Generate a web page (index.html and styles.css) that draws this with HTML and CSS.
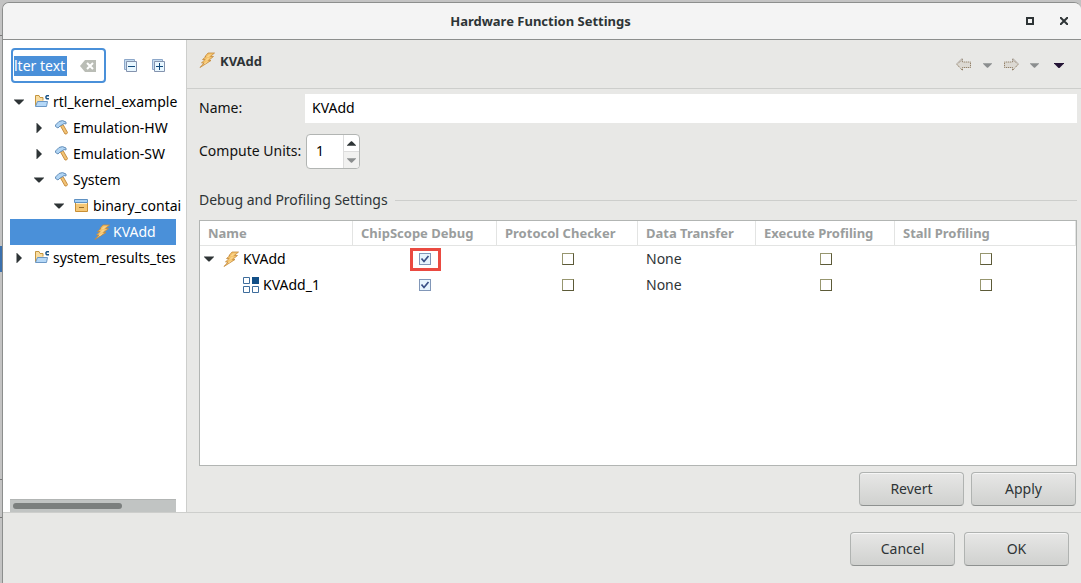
FILE: index.html
```html
<!DOCTYPE html>
<html lang="en">
<head>
<meta charset="utf-8">
<title>Hardware Function Settings</title>
<meta name="viewport" content="width=device-width, initial-scale=1">
<link rel="stylesheet" href="styles.css">
</head>
<body>
<svg class="defs" aria-hidden="true">
  <symbol id="bolt" viewBox="0 0 16 16">
    <path d="M9 1H15.500L11.500 4.500H14.500L9.500 8.500H12L1 15.500 5 11H2.500L6 7.500H3.500L7 4.500H6z" fill="#f5c36c" stroke="#c48a3c" stroke-width=".8" stroke-linejoin="round"/>
    <path d="M11 2.500 8.500 5M9.500 6 7 8.500M8 9.500 5.500 12" stroke="#ffe3a4" fill="none"/>
  </symbol>
  <symbol id="hammer" viewBox="0 0 16 16">
    <path d="M6.500 6 9 4.500 13.500 12.500q-.5 2-2.500 1.500z" fill="#f3c374" stroke="#c58e42"/>
    <path d="M1.500 6.500V5L5 1.500Q8.500-.5 12 2v2L10 3.500 8 5 6.500 5.500 4 8z" fill="#b0d4f3" stroke="#6790ba"/>
  </symbol>
  <symbol id="folder" viewBox="0 0 16 16">
    <path d="M1.500 12V1.500H5l1 2h3v3" fill="#f9dda0" stroke="#c4953f"/>
    <path d="M1.500 12.500 3.500 7.500h10l-1 5z" fill="#b5d8f7" stroke="#6b97c5"/>
    <path d="M15 1.700h-2.200l-.8.800v1.500l.8.800H15" fill="none" stroke="#165084" stroke-width="1.400"/>
  </symbol>
  <symbol id="box" viewBox="0 0 16 16">
    <path d="M1.500 4.500h12v9h-12z" fill="#f5c877" stroke="#c98f35"/>
    <path d="M.5 1.500h13v3H.500z" fill="#a7d0f4" stroke="#5f91c2"/>
    <path d="M2 5.500h11" stroke="#fff0cc"/><path d="M5 9.500h5" stroke="#976b29"/>
  </symbol>
  <symbol id="down" viewBox="0 0 10 5"><path d="M0 0h10v.5L5.500 5h-1L0 .5z" fill="currentColor"/></symbol>
  <symbol id="right" viewBox="0 0 5 10"><path d="M0 0h.5L5 4.500v1L.5 10H0z" fill="currentColor"/></symbol>
  <symbol id="arrow" viewBox="0 0 16 14">
    <path d="M1 6.500 6.500 1v3h8v5.500h-8v3z" fill="#dcd9d3" stroke="#7d674a" stroke-dasharray="1 1"/>
    <path d="M.5 6 6 .5v3" fill="none" stroke="#b5afa8"/>
  </symbol>
</svg>
<div class="dialog">
  <header class="titlebar">
    <h1>Hardware Function Settings</h1>
    <button class="winbtn" aria-label="Maximize"><svg width="8" height="8"><path d="M1 1h6v6H1z" fill="none" stroke="#2e3436" stroke-width="2"/></svg></button>
    <button class="winbtn" aria-label="Close"><svg width="8" height="8"><path d="M0 0 8 8M8 0 0 8" stroke="#2e3436" stroke-width="2"/></svg></button>
  </header>

  <div class="main">
    <aside class="side">
      <div class="tools">
        <div class="filter">
          <input type="text" value="lter text" aria-label="Filter">
          <button aria-label="Clear filter"><svg width="16" height="12" viewBox="0 0 16 12"><path d="M0 6 5 0h11v12H5z" fill="#babdb6"/><path d="m7 3 6 6M13 3 7 9" stroke="#fff" stroke-width="2"/></svg></button>
        </div>
        <button class="tool" aria-label="Collapse All"><svg width="14" height="14"><path d="M.5.500h10v10H.500z" fill="#c5dcef" stroke="#8da8ca"/><path d="M2.500 2.500h10v10h-10z" fill="#e8f7ff" stroke="#8493ae"/><path d="M4 7.500h7" stroke="#124a7d"/></svg></button>
        <button class="tool" aria-label="Expand All"><svg width="14" height="14"><path d="M.5.500h10v10H.500z" fill="#c5dcef" stroke="#8da8ca"/><path d="M2.500 2.500h10v10h-10z" fill="#e8f7ff" stroke="#8493ae"/><path d="M4 7.500h7M7.500 4v7" stroke="#124a7d"/></svg></button>
      </div>
      <ul class="tree">
        <li class="node"><svg class="tw"><use href="#down"/></svg><svg class="ic"><use href="#folder"/></svg><span>rtl_kernel_example</span></li>
        <li class="node l1"><svg class="tw"><use href="#right"/></svg><svg class="ic"><use href="#hammer"/></svg><span>Emulation-HW</span></li>
        <li class="node l1"><svg class="tw"><use href="#right"/></svg><svg class="ic"><use href="#hammer"/></svg><span>Emulation-SW</span></li>
        <li class="node l1"><svg class="tw"><use href="#down"/></svg><svg class="ic"><use href="#hammer"/></svg><span>System</span></li>
        <li class="node l2"><svg class="tw"><use href="#down"/></svg><svg class="ic"><use href="#box"/></svg><span>binary_contai</span></li>
        <li class="node l3 selected"><svg class="tw"></svg><svg class="ic"><use href="#bolt"/></svg><span>KVAdd</span></li>
        <li class="node"><svg class="tw"><use href="#right"/></svg><svg class="ic"><use href="#folder"/></svg><span>system_results_tes</span></li>
      </ul>
      <div class="scrollbar"><div class="thumb"></div></div>
    </aside>

    <section class="page">
      <div class="pagehead">
        <svg class="ic"><use href="#bolt"/></svg>
        <h2>KVAdd</h2>
        <nav class="history" aria-label="History">
          <button aria-label="Back"><svg width="16" height="14"><use href="#arrow"/></svg></button>
          <button class="menu" aria-label="Back history"><svg width="9" height="5"><use href="#down"/></svg></button>
          <button aria-label="Forward"><svg class="flip" width="16" height="14"><use href="#arrow"/></svg></button>
          <button class="menu" aria-label="Forward history"><svg width="9" height="5"><use href="#down"/></svg></button>
          <button class="menu dark" aria-label="View menu"><svg width="10" height="5"><use href="#down"/></svg></button>
        </nav>
      </div>

      <div class="content">
        <div class="field">
          <label for="name">Name:</label>
          <input id="name" class="name" type="text" value="KVAdd">
        </div>
        <div class="field units">
          <label for="units">Compute Units:</label>
          <div class="spinner">
            <input id="units" type="number" value="1" min="1">
            <div class="steps">
              <button aria-label="Increase"><svg class="up" width="9" height="5"><use href="#down"/></svg></button>
              <button aria-label="Decrease" disabled><svg width="9" height="5"><use href="#down"/></svg></button>
            </div>
          </div>
        </div>
        <h3 class="legend">Debug and Profiling Settings</h3>
        <div class="tablebox">
          <table>
            <colgroup><col class="c1"><col class="c2"><col class="c3"><col class="c4"><col class="c5"><col></colgroup>
            <thead><tr><th>Name</th><th>ChipScope Debug</th><th>Protocol Checker</th><th>Data Transfer</th><th>Execute Profiling</th><th>Stall Profiling</th></tr></thead>
            <tbody>
              <tr>
                <td><div class="item"><svg class="tw"><use href="#down"/></svg><svg class="ic"><use href="#bolt"/></svg><span>KVAdd</span></div></td>
                <td class="tick"><span class="mark"><input type="checkbox" checked aria-label="KVAdd ChipScope Debug"></span></td>
                <td class="tick"><input type="checkbox" aria-label="KVAdd Protocol Checker"></td>
                <td>None</td>
                <td class="tick"><input type="checkbox" aria-label="KVAdd Execute Profiling"></td>
                <td class="tick"><input type="checkbox" aria-label="KVAdd Stall Profiling"></td>
              </tr>
              <tr>
                <td><div class="item child"><svg class="tw"></svg><svg class="ic" viewBox="0 0 16 16"><path d="M.5.500h6v6h-6zM.5 9.500h6v6h-6zM9.500 9.500h6v6h-6z" fill="#fff" stroke="#3e6d9c"/><path d="M9 0h7v7H9z" fill="#124f87"/></svg><span>KVAdd_1</span></div></td>
                <td class="tick"><input type="checkbox" checked aria-label="KVAdd_1 ChipScope Debug"></td>
                <td class="tick"><input type="checkbox" aria-label="KVAdd_1 Protocol Checker"></td>
                <td>None</td>
                <td class="tick"><input type="checkbox" aria-label="KVAdd_1 Execute Profiling"></td>
                <td class="tick"><input type="checkbox" aria-label="KVAdd_1 Stall Profiling"></td>
              </tr>
            </tbody>
          </table>
        </div>
        <div class="actions"><button class="btn">Revert</button><button class="btn">Apply</button></div>
      </div>
    </section>
  </div>

  <footer class="footer"><button class="btn">Cancel</button><button class="btn">OK</button></footer>
</div>
</body>
</html>
```
FILE: styles.css
```css
* { box-sizing: border-box; }

body {
  margin: 0;
  min-height: 100vh;
  display: flex;
  padding: 2px 0 0 2px;
  color: #2e3436;
  font: 14px/20px "Noto Sans", "Open Sans", sans-serif;
  background:
    linear-gradient(#3b70ad, #3b70ad) 0 246px / 2px 26px no-repeat,
    linear-gradient(#777, #777) 0 35px / 2px 1px no-repeat,
    linear-gradient(#777, #777) 0 479px / 2px 1px no-repeat,
    linear-gradient(#777, #777) 0 517px / 2px 1px no-repeat,
    #c3c3c3;
}

.defs { position: absolute; width: 0; height: 0; }
svg { display: block; flex: none; }
h1, h2, h3 { margin: 0; font-size: 13px; line-height: 20px; }
button { margin: 0; padding: 0; border: 0; background: none; font: inherit; color: inherit; }
input { font: inherit; color: #000; margin: 0; }

.dialog {
  flex: 1;
  min-width: 0;
  display: flex;
  flex-direction: column;
  border: 1px solid #8c8e8d;
  border-width: 1px 0 0 1px;
  border-radius: 7px 7px 0 0;
  background: #e8e8e6;
  overflow: hidden;
}

.titlebar {
  display: flex;
  align-items: center;
  gap: 26px;
  height: 37px;
  padding: 0 13px 0 78px;
  background: #f4f4f4;
  border-bottom: 1px solid #8c8e8d;
}
.titlebar h1 { flex: 1; text-align: center; }

.main { flex: 1; display: flex; min-height: 0; border-bottom: 1px solid #cdcecc; }

.side {
  width: 184px;
  flex: none;
  display: flex;
  flex-direction: column;
  background: #fff;
  border-right: 1px solid #cdcecc;
}
.tools { display: flex; align-items: center; gap: 14px; padding: 8px 0 6px 8px; }
.filter {
  display: flex;
  align-items: center;
  justify-content: space-between;
  width: 95px;
  height: 35px;
  margin-right: 4px;
  padding: 0 8px 0 1px;
  border: 2px solid #4a90d9;
  border-radius: 4px;
}
.filter input { width: 53px; height: 20px; padding: 0; border: 0; background: #4a90d9; color: #fff; }

.tree { flex: 1; list-style: none; margin: 0 10px 0 7px; padding: 0; color: #000; }
.node { display: flex; align-items: center; height: 26px; padding-left: 4px; white-space: nowrap; }
.tw { width: 10px; height: 10px; color: #2e3436; }
.tw use { width: 10px; height: 10px; }
.ic { width: 16px; height: 16px; margin: 0 3px 0 10px; }
.l1 { padding-left: 24px; }
.l2 { padding-left: 44px; }
.l3 { padding-left: 64px; }
.selected { background: #4a90d9; color: #fff; }
.scrollbar { margin: 0 10px 0 7px; padding: 3px; height: 13px; background: #c1c4c3; border-top: 1px solid #b2b5b4; }
.thumb { width: 68%; height: 6px; border-radius: 3px; background: #7b7f7e; }

.page { flex: 1; min-width: 0; display: flex; flex-direction: column; }
.pagehead { display: flex; align-items: flex-start; height: 49px; padding: 12px 17px 0 12px; border-bottom: 1px solid #cdcecc; }
.pagehead .ic { margin: 0 5px 0 0; }
.pagehead h2 { line-height: 18px; }
.history { display: flex; align-items: center; gap: 11px; margin-left: auto; padding-top: 6px; }
.history .menu { color: #8b8e8f; }
.history .dark { color: #241436; margin-left: 4px; }
.flip { transform: scaleX(-1); }
.up { transform: scaleY(-1); }

.content { flex: 1; display: flex; flex-direction: column; padding: 5px 4px 6px 12px; }
.field { display: flex; align-items: center; color: #111; }
.field label { width: 106px; padding-bottom: 2px; }
.name { flex: 1; min-width: 0; height: 29px; padding: 0 7px 2px; border: 0; background: #fff; }
.units { margin-top: 11px; }
.spinner { display: flex; width: 54px; height: 35px; margin-left: 1px; border: 1px solid #b2b5b3; border-radius: 4px; background: #fff; overflow: hidden; }
.spinner input { flex: 1; min-width: 0; padding: 0 9px 2px; border: 0; background: none; appearance: textfield; }
.spinner input::-webkit-inner-spin-button { appearance: none; margin: 0; }
.steps { display: flex; flex-direction: column; width: 16px; border-left: 1px solid #ddd; color: #2e3436; }
.steps button { flex: 1; display: flex; align-items: center; justify-content: center; }
.steps button:disabled { background: #f1f1f0; border-top: 1px solid #ddd; color: #8b8e8f; }

.legend { display: flex; align-items: center; gap: 7px; margin: 21px 0 10px; font-size: 14px; font-weight: 400; }
.legend::after { content: ""; flex: 1; height: 1px; background: #cdcecc; }

.tablebox { flex: 1; border: 1px solid #b2b5b3; background: #fff; overflow: hidden; }
table { width: 100%; table-layout: fixed; border-collapse: separate; border-spacing: 0; }
.c1 { width: 153px; }
.c2 { width: 144px; }
.c3 { width: 141px; }
.c4 { width: 118px; }
.c5 { width: 139px; }
th, td { padding: 0 0 0 8px; text-align: left; white-space: nowrap; }
th { height: 25px; font-size: 13px; color: #9a9d9d; border: solid #e3e4e3; border-width: 0 1px 1px 0; }
td { height: 26px; }
td:first-child { padding-left: 4px; color: #000; }
.item { display: flex; align-items: center; }
.item .ic { margin-left: 9px; margin-right: 4px; }
.child { padding-left: 20px; }
.tick { padding: 0; text-align: center; line-height: 0; }
.mark { display: inline-flex; align-items: center; justify-content: center; width: 31px; height: 23px; border: 3px solid #ea4a41; }
.tick input {
  appearance: none;
  width: 12px;
  height: 12px;
  border: 1px solid;
  border-color: #97966f #5c5a38 #5c5a38 #97966f;
  background: #fff;
  vertical-align: middle;
}
.tick input:checked {
  border-color: #8197b8;
  background: #e6f4fd url("data:image/svg+xml,%3Csvg xmlns='http://www.w3.org/2000/svg' viewBox='0 0 10 10'%3E%3Cpath d='M1.500 4.500 4 7.500 8.500 2' fill='none' stroke='%23384f85' stroke-width='1.700'/%3E%3C/svg%3E") center / 10px 10px;
}

.actions, .footer { display: flex; justify-content: flex-end; }
.actions { gap: 7px; padding: 6px 1px 0 0; }
.btn {
  width: 105px;
  height: 34px;
  border: 1px solid #b0b3b1;
  border-bottom-color: #8e9190;
  border-radius: 4px;
  background: linear-gradient(#e7e7e6, #d0d1cf);
  box-shadow: inset 0 1px #f6f6f6;
}
.footer { gap: 9px; padding: 19px 12px 17px; }
```
